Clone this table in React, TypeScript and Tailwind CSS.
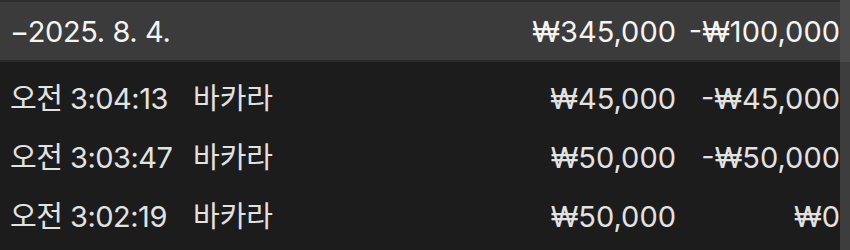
import React from "react";

const rows = [
  { time: "오전 3:04:13", game: "바카라", amount: "₩45,000", net: "-₩45,000" },
  { time: "오전 3:03:47", game: "바카라", amount: "₩50,000", net: "-₩50,000" },
  { time: "오전 3:02:19", game: "바카라", amount: "₩50,000", net: "₩0" },
];

const font = { fontFamily: 'Inter, "Noto Sans CJK KR", sans-serif' };

export default function App() {
  return (
    <div className="flex h-[250px] w-[850px] overflow-hidden bg-[#1c1c1c]" style={font}>
      <div className="flex min-w-0 flex-1 flex-col">
        <div className="flex h-[62px] items-center border-t-2 border-b-2 border-t-[#2f2f2f] border-b-[#2a2a2a] bg-[#3b3b3b] pl-[10px] text-[29px] leading-none text-[#f4f4f4]">
          <div className="flex-1 tracking-[-0.4px]">−2025. 8. 4.</div>
          <div className="text-right">₩345,000</div>
          <div className="w-[164px] text-right">-₩100,000</div>
        </div>
        <div className="flex flex-col pt-[7px] text-[29px] leading-none text-[#e2e2e2]">
          {rows.map((r) => (
            <div key={r.time} className="flex h-[59px] items-center pl-[10px]">
              <div className="w-[183px] tracking-[-0.5px]">{r.time}</div>
              <div className="flex-1">{r.game}</div>
              <div className="text-right">{r.amount}</div>
              <div className="w-[164px] text-right">{r.net}</div>
            </div>
          ))}
        </div>
      </div>
      <div className="flex w-[10px] flex-col">
        <div className="h-[62px] bg-[#4a4a4a]" />
        <div className="flex-1 bg-[#3c3c3c]" />
      </div>
    </div>
  );
}
